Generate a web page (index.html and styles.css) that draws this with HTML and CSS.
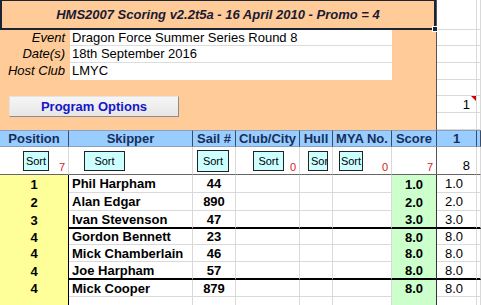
FILE: index.html
```html
<!DOCTYPE html>
<html lang="en">
<head>
  <meta charset="UTF-8">
  <title>HMS2007 Scoring</title>
  <link rel="stylesheet" href="styles.css">
</head>
<body>
  <div class="sheet">

    <!-- Event details panel -->
    <div class="panel">
      <div class="title">HMS2007 Scoring v2.2t5a - 16 April 2010 - Promo = 4<span class="handle"></span></div>
      <div class="info">
        <div class="label">Event</div><div class="value">Dragon Force Summer Series Round 8</div>
        <div class="label">Date(s)</div><div class="value">18th September 2016</div>
        <div class="label">Host Club</div><div class="value">LMYC</div>
      </div>
      <button class="options">Program Options</button>
    </div>

    <!-- cells right of the panel -->
    <div class="cell"></div><div class="cell"></div>
    <div class="cell"></div><div class="cell"></div>
    <div class="cell"></div><div class="cell"></div>
    <div class="cell"></div><div class="cell"></div>
    <div class="cell"></div><div class="cell"></div>
    <div class="cell num comment">1</div><div class="cell"></div>
    <div class="cell"></div><div class="cell"></div>

    <!-- column headings -->
    <div class="head">Position</div>
    <div class="head">Skipper</div>
    <div class="head">Sail #</div>
    <div class="head">Club/City</div>
    <div class="head">Hull</div>
    <div class="head">MYA No.</div>
    <div class="head">Score</div>
    <div class="head">1</div>
    <div class="head"></div>

    <!-- sort buttons -->
    <div class="sortcell pad-pos"><button class="sort sort-pos">Sort</button><span class="count">7</span></div>
    <div class="sortcell pad-skipper"><button class="sort sort-skipper">Sort</button></div>
    <div class="sortcell pad-sail"><button class="sort sort-sail">Sort</button></div>
    <div class="sortcell pad-club"><button class="sort sort-club">Sort</button><span class="count">0</span></div>
    <div class="sortcell pad-hull"><button class="sort sort-hull">Sort</button></div>
    <div class="sortcell pad-mya"><button class="sort sort-mya">Sort</button><span class="count">0</span></div>
    <div class="sortcell sort-score"><span class="count">7</span></div>
    <div class="sortcell"><span class="count total">8</span></div>
    <div class="sortcell"></div>

    <!-- results -->
    <div class="pos">1</div><div class="cell name">Phil Harpham</div><div class="cell sail">44</div>
    <div class="cell"></div><div class="cell"></div><div class="cell"></div>
    <div class="score">1.0</div><div class="cell race">1.0</div><div class="cell"></div>

    <div class="pos">2</div><div class="cell name">Alan Edgar</div><div class="cell sail">890</div>
    <div class="cell"></div><div class="cell"></div><div class="cell"></div>
    <div class="score">2.0</div><div class="cell race">2.0</div><div class="cell"></div>

    <div class="pos">3</div><div class="cell name brk">Ivan Stevenson</div><div class="cell sail brk">47</div>
    <div class="cell brk"></div><div class="cell brk"></div><div class="cell brk"></div>
    <div class="score brk">3.0</div><div class="cell race brk">3.0</div><div class="cell brk"></div>

    <div class="pos">4</div><div class="cell name">Gordon Bennett</div><div class="cell sail">23</div>
    <div class="cell"></div><div class="cell"></div><div class="cell"></div>
    <div class="score">8.0</div><div class="cell race">8.0</div><div class="cell"></div>

    <div class="pos">4</div><div class="cell name">Mick Chamberlain</div><div class="cell sail">46</div>
    <div class="cell"></div><div class="cell"></div><div class="cell"></div>
    <div class="score">8.0</div><div class="cell race">8.0</div><div class="cell"></div>

    <div class="pos">4</div><div class="cell name brk">Joe Harpham</div><div class="cell sail brk">57</div>
    <div class="cell brk"></div><div class="cell brk"></div><div class="cell brk"></div>
    <div class="score brk">8.0</div><div class="cell race brk">8.0</div><div class="cell brk"></div>

    <div class="pos">4</div><div class="cell name">Mick Cooper</div><div class="cell sail">879</div>
    <div class="cell"></div><div class="cell"></div><div class="cell"></div>
    <div class="score">8.0</div><div class="cell race">8.0</div><div class="cell"></div>

    <div class="pos"></div><div class="cell"></div><div class="cell"></div>
    <div class="cell"></div><div class="cell"></div><div class="cell"></div>
    <div class="score"></div><div class="cell"></div><div class="cell"></div>
  </div>
</body>
</html>
```

FILE: styles.css
```css
* {
  box-sizing: border-box;
}

body {
  margin: 0;
  font-family: "Liberation Sans", Arial, sans-serif;
  font-size: 13px;
  color: #000;
  background: #fff;
}

.sheet {
  display: grid;
  grid-template-columns: 69px 124px 43px 64px 33px 59px 45px 40px 1fr;
  grid-template-rows: 30px 16px 17px 17px 16px 17px 17px 17px 28px 18px 18px 18px 16px 17px 18px 17px 18px;
  width: 481px;
  height: 305px;
  overflow: hidden;
}

.cell {
  display: flex;
  align-items: center;
  white-space: nowrap;
  border-right: 1px solid #d9d9d9;
  border-bottom: 1px solid #d9d9d9;
}

/* top panel */
.panel {
  grid-column: 1 / 8;
  grid-row: 1 / 8;
  background: #ffcc99;
  border-right: 1px solid #555;
}

.title {
  position: relative;
  height: 30px;
  display: flex;
  align-items: center;
  justify-content: center;
  padding-bottom: 1px;
  border: 2px solid #1b2433;
  border-top-width: 1px;
  font-weight: bold;
  font-style: italic;
  color: #1a1a33;
}

.handle {
  position: absolute;
  right: -4px;
  bottom: -4px;
  width: 6px;
  height: 6px;
  background: #1b2433;
  border: 1px solid #fff;
}

.info {
  display: grid;
  grid-template-columns: 70px 322px;
  grid-template-rows: 16px 17px 17px;
}

.label {
  text-align: right;
  padding-right: 5px;
  font-style: italic;
  line-height: 16px;
}

.value {
  background: #fff;
  padding-left: 2px;
  line-height: 16px;
  border-bottom: 1px solid #dcdcdc;
}

.value:last-child {
  border-bottom: none;
}

.options {
  display: block;
  margin: 16px 0 0 9px;
  width: 170px;
  height: 21px;
  padding: 0;
  font-family: inherit;
  font-size: 13px;
  font-weight: bold;
  color: #1616c8;
  background: linear-gradient(#f6f6f6, #e6e6e6);
  border: 1px solid;
  border-color: #e4e4e4 #8c8c8c #8c8c8c #e4e4e4;
}

.num {
  justify-content: flex-end;
  padding-right: 6px;
}

.comment {
  position: relative;
}

.comment::after {
  content: "";
  position: absolute;
  top: 0;
  right: 0;
  border-top: 5px solid #cc0000;
  border-left: 5px solid transparent;
}

/* headings */
.head {
  display: flex;
  align-items: center;
  justify-content: center;
  background: #99ccff;
  color: #15305a;
  font-weight: bold;
  border-top: 1px solid #8aa0bb;
  border-right: 1px solid #3b4c66;
  border-bottom: 1px solid #8aa0bb;
}

/* sort row */
.sortcell {
  display: flex;
  align-items: flex-start;
  padding-top: 4px;
  border-right: 1px solid #d9d9d9;
  border-bottom: 1px solid #666;
}

.sort-score {
  border-right-color: #555;
}

.sort {
  height: 20px;
  padding: 0;
  font-family: inherit;
  font-size: 11px;
  color: #000;
  background: #ccffff;
  border: 1px solid #222;
  white-space: nowrap;
  overflow: hidden;
}

.pad-pos { padding-left: 23px; }
.pad-skipper { padding-left: 15px; }
.pad-sail { padding-left: 4px; padding-top: 3px; }
.pad-club { padding-left: 17px; }
.pad-hull { padding-left: 8px; }
.pad-mya { padding-left: 6px; }

.sort-pos { width: 26px; }
.sort-skipper { width: 41px; }
.sort-sail { width: 32px; height: 22px; }
.sort-club { width: 31px; }
.sort-hull { width: 20px; text-align: left; padding-left: 2px; }
.sort-mya { width: 24px; }

.count {
  margin-left: auto;
  align-self: flex-end;
  padding-right: 3px;
  margin-bottom: 1px;
  font-size: 11px;
  line-height: 12px;
  color: #d42020;
}

.count.total {
  padding-right: 6px;
  font-size: 13px;
  line-height: 14px;
  color: #000;
}

/* results */
.pos {
  display: flex;
  align-items: center;
  justify-content: center;
  background: #ffff99;
  font-weight: bold;
  border-right: 1px solid #000;
}

.name {
  padding-left: 3px;
  font-weight: bold;
}

.sail {
  justify-content: center;
  font-weight: bold;
}

.score {
  display: flex;
  align-items: center;
  justify-content: center;
  background: #ccffcc;
  font-weight: bold;
  border-right: 1px solid #333;
}

.race {
  justify-content: center;
  padding-right: 5px;
}

.brk {
  border-bottom: 2px solid #000;
}
```
